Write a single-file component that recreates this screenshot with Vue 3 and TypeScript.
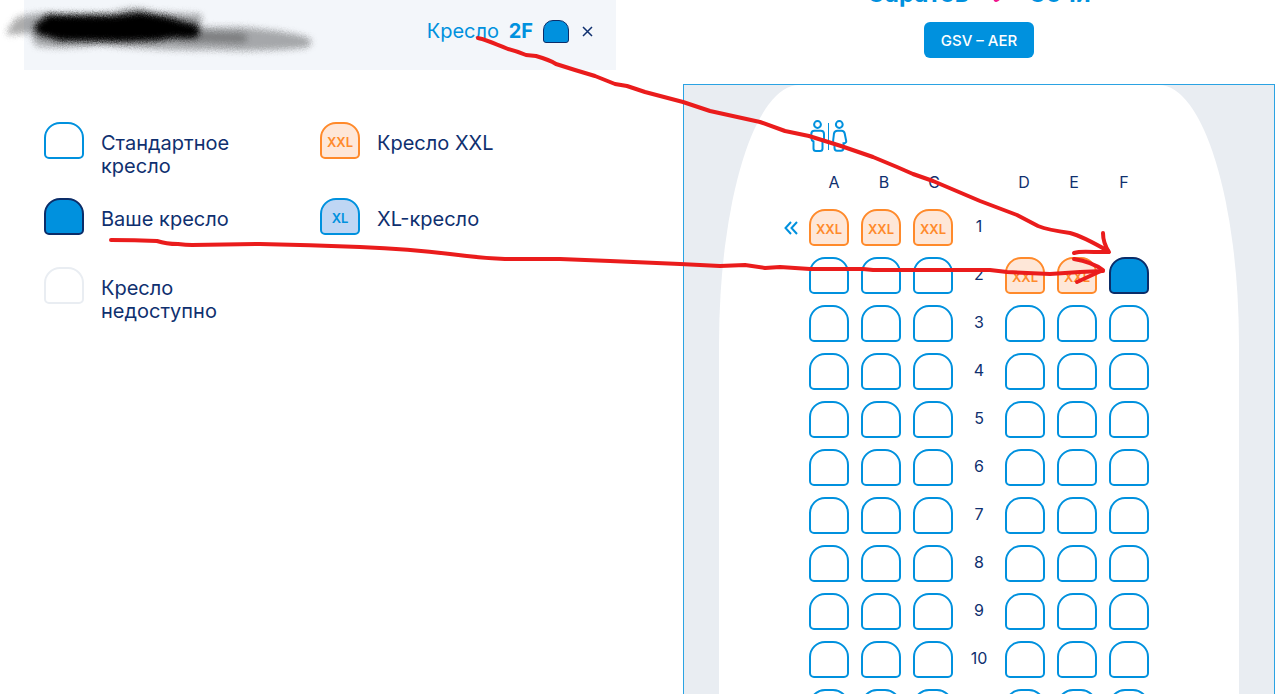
<script setup lang="ts">
type SeatKind = 'standard' | 'xxl' | 'xl' | 'selected' | 'unavailable'

interface LegendItem {
  kind: SeatKind
  label: string
}

interface SeatRow {
  number: number
  left: SeatKind[]
  right: SeatKind[]
  exit: boolean
}

const legend: LegendItem[] = [
  { kind: 'standard', label: 'Стандартное кресло' },
  { kind: 'xxl', label: 'Кресло XXL' },
  { kind: 'selected', label: 'Ваше кресло' },
  { kind: 'xl', label: 'XL-кресло' },
  { kind: 'unavailable', label: 'Кресло недоступно' },
]

const leftLetters = ['A', 'B', 'C']
const rightLetters = ['D', 'E', 'F']

const three = (kind: SeatKind): SeatKind[] => [kind, kind, kind]

const rows: SeatRow[] = [
  { number: 1, left: three('xxl'), right: [], exit: true },
  { number: 2, left: three('standard'), right: ['xxl', 'xxl', 'selected'], exit: false },
  ...Array.from({ length: 9 }, (_, i) => ({
    number: i + 3,
    left: three('standard'),
    right: three('standard'),
    exit: false,
  })),
]

const mark = (kind: SeatKind): string => (kind === 'xxl' ? 'XXL' : kind === 'xl' ? 'XL' : '')
</script>

<template>
  <main class="page">
    <section class="side">
      <header class="passenger">
        <span class="passenger-seat">Кресло <b>2F</b></span>
        <span class="seat selected small"></span>
        <button class="close" type="button" aria-label="Убрать кресло">
          <svg width="11" height="11" viewBox="0 0 11 11"><path d="M1 1l9 9M10 1l-9 9" /></svg>
        </button>
      </header>
      <ul class="legend">
        <li v-for="item in legend" :key="item.kind">
          <span class="seat" :class="item.kind">{{ mark(item.kind) }}</span>
          <span class="legend-label">{{ item.label }}</span>
        </li>
      </ul>
    </section>

    <section class="map">
      <h1 class="route">
        <span>Саратов</span>
        <svg class="plane" width="28" height="28" viewBox="0 0 28 28">
          <path d="M2 13l21-11-6 12q-2 6-6 7-3-1 0-4l6-5" />
        </svg>
        <span>Сочи</span>
      </h1>
      <button class="segment" type="button">GSV – AER</button>

      <div class="cabin">
        <div class="fuselage">
          <div class="service">
            <svg width="38" height="32" viewBox="0 0 38 32" aria-label="Туалет">
              <circle cx="7.5" cy="4.5" r="3.4" />
              <path d="M4.5 10.7h6.200q3.300 0 3.300 3.300v4.500q0 2-1.500 2.500v7.500q0 2.500-2.500 2.500h-4q-2.500 0-2.500-2.500v-7q-2.200-1-2.200-3.500v-4q0-3.300 3.200-3.300z" />
              <path class="thin" d="M18.500 3v27" />
              <circle cx="29.300" cy="4.500" r="3.400" />
              <path d="M27.500 10.700h4q2.700 0 3.200 2.800l1.500 7.500q.3 1.600-1.700 2.300h-1v4.700q0 2.700-2.500 2.700h-4q-2.500 0-2.500-2.700v-4.700q-1.500-.3-1.400-2.300l.9-7.500q.5-2.800 3.500-2.800z" />
            </svg>
          </div>
          <div class="letters">
            <span v-for="l in leftLetters" :key="l">{{ l }}</span>
            <span class="gap"></span>
            <span v-for="l in rightLetters" :key="l">{{ l }}</span>
          </div>
          <div class="rows">
            <div v-for="row in rows" :key="row.number" class="row">
              <span class="exit">
                <svg v-if="row.exit" width="14" height="14" viewBox="0 0 14 14">
                  <path d="M7 1L1.500 7 7 13M13 1L7.500 7 13 13" />
                </svg>
              </span>
              <button
                v-for="(kind, i) in row.left"
                :key="leftLetters[i]"
                type="button"
                class="seat"
                :class="kind"
                :aria-label="`${row.number}${leftLetters[i]}`"
              >{{ mark(kind) }}</button>
              <span class="number">{{ row.number }}</span>
              <button
                v-for="(kind, i) in row.right"
                :key="rightLetters[i]"
                type="button"
                class="seat"
                :class="kind"
                :aria-label="`${row.number}${rightLetters[i]}`"
              >{{ mark(kind) }}</button>
            </div>
          </div>
        </div>
      </div>
    </section>

    <svg class="ink" width="1280" height="694" viewBox="0 0 1280 694" aria-hidden="true">
      <defs>
        <filter id="spray" x="-10%" y="-60%" width="120%" height="220%">
          <feGaussianBlur stdDeviation="3" result="soft" />
          <feTurbulence type="fractalNoise" baseFrequency="0.8" numOctaves="2" seed="4" />
          <feDisplacementMap in="soft" scale="4" xChannelSelector="R" yChannelSelector="G" />
        </filter>
      </defs>
      <g filter="url(#spray)">
        <path d="M7 31L16 18Q36 11 60 14L110 13Q135 4 155 12L200 14Q205 20 198 27L240 27Q290 31 309 38Q315 44 305 48Q260 52 215 50Q150 51 100 45Q60 50 36 46L30 33L8 35Z" fill="#000" opacity=".32" />
        <path d="M180 36L242 38" stroke="#000" stroke-width="10" stroke-linecap="round" opacity=".25" />
        <path d="M34 27L48 14Q80 15 115 15L140 12L165 16L198 25Q204 32 192 36L155 41L120 42L60 41L40 35Z" fill="#000" />
        <path d="M42 28L90 28L140 30L192 31" stroke="#000" stroke-width="15" stroke-linecap="round" fill="none" />
      </g>
      <g class="pen">
        <path d="M478 38Q484 39 508 49Q516 51 526 55L536 56Q550 60 556 64L575 70L595 76L615 84L627 86L645 92L683 102L710 111L760 122L785 131L809 136L841 146L873 157L897 167L913 174L933 181L980 201L1017 215L1038 226Q1048 230 1070 233Q1082 236 1108 251" />
        <path d="M1103 233Q1103 243 1109 252L1094 252Q1080 251 1074 253" />
        <path d="M111 240Q135 240 157 241Q166 244 178 244Q186 245 192 245L260 244Q310 245 360 247Q410 249 450 254Q480 258 505 259L560 259L610 261L680 264L720 266L745 265L765 268L780 267L810 269L863 269L873 270L990 270L1007 272L1050 274L1080 272L1103 271" />
        <path d="M1074 259Q1092 262 1103 270L1077 282" />
      </g>
    </svg>
  </main>
</template>

<style>
body {
  margin: 0;
  background: #fff;
  overflow: hidden;
}
</style>

<style scoped>
.page {
  position: relative;
  display: grid;
  grid-template-columns: 1fr 1fr;
  gap: 67px;
  height: 100vh;
  padding: 0 5px 0 24px;
  box-sizing: border-box;
  overflow: hidden;
  font-family: Inter, 'Open Sans', sans-serif;
  color: #0f306f;
}

.passenger {
  display: flex;
  align-items: center;
  justify-content: flex-end;
  gap: 10px;
  padding: 16px 20px 24px;
  background: #f3f6fa;
}

.passenger-seat {
  font-size: 20px;
  line-height: 30px;
  color: #0091de;
}

.passenger-seat b {
  margin-left: 4px;
}

.close {
  display: flex;
  margin: 0;
  padding: 3px;
  border: 0;
  background: none;
}

.close svg {
  fill: none;
  stroke: #0f306f;
  stroke-width: 1.5;
}

.seat {
  display: flex;
  flex: none;
  align-items: center;
  justify-content: center;
  box-sizing: border-box;
  width: 40px;
  height: 37px;
  margin: 0;
  padding: 3px 0 0;
  border: 2px solid #0091de;
  border-radius: 16px 16px 5px 5px;
  background: #fff;
  color: #0091de;
  font-family: inherit;
  font-size: 13px;
  font-weight: 600;
  line-height: 16px;
}

.seat.xxl {
  border-color: #ff8a2b;
  background: #fee7d8;
  color: #ff8a2b;
}

.seat.xl {
  background: #bfd6f4;
}

.seat.selected {
  border-color: #0b2d69;
  background: #0091de;
}

.seat.unavailable {
  border-color: #e9edf2;
}

.seat.small {
  width: 26px;
  height: 23px;
  border-width: 1px;
  border-radius: 10px 10px 3px 3px;
}

.legend {
  display: grid;
  grid-template-columns: 1fr 1fr;
  row-gap: 20px;
  margin: 0;
  padding: 52px 20px 0;
  list-style: none;
}

.legend li {
  display: flex;
  align-items: flex-start;
  gap: 17px;
  min-height: 49px;
}

.legend-label {
  max-width: 150px;
  padding-top: 10px;
  font-size: 20px;
  line-height: 23px;
}

.map {
  display: flex;
  flex-direction: column;
  align-items: center;
}

.route {
  display: flex;
  align-items: center;
  gap: 16px;
  margin: -22px 0 12px;
  font-size: 24px;
  line-height: 32px;
  color: #0091de;
}

.plane {
  fill: none;
  stroke: #f0148c;
  stroke-width: 2;
}

.segment {
  height: 36px;
  padding: 0 17px;
  border: 0;
  border-radius: 6px;
  background: #0091de;
  color: #fff;
  font-family: inherit;
  font-size: 15px;
  font-weight: 500;
}

.cabin {
  align-self: stretch;
  margin-top: 26px;
  padding: 0 35px;
  border: 1px solid #2ba3e3;
  background: #e9edf2;
}

.fuselage {
  display: flex;
  flex-direction: column;
  align-items: center;
  padding: 35px 0 48px;
  border-radius: 80px 80px 0 0 / 260px 260px 0 0;
  background: #fff;
}

.service {
  display: flex;
  width: 338px;
}

.service svg {
  fill: none;
  stroke: #0091de;
  stroke-width: 2;
}

.service .thin {
  stroke-width: 1;
}

.letters {
  display: flex;
  width: 340px;
  margin: 20px 0 17px;
  font-size: 16px;
  line-height: 20px;
  text-align: center;
}

.letters span {
  width: 50px;
}

.letters .gap {
  width: 40px;
}

.rows {
  display: grid;
  row-gap: 11px;
}

.row {
  display: grid;
  grid-template-columns: 13px repeat(3, 40px) 28px repeat(3, 40px) 13px;
  column-gap: 12px;
  align-items: center;
  min-height: 37px;
}

.exit {
  display: flex;
}

.exit svg {
  flex: none;
  fill: none;
  stroke: #0091de;
  stroke-width: 2;
}

.number {
  padding-bottom: 4px;
  font-size: 16px;
  line-height: 20px;
  text-align: center;
}

.ink {
  position: absolute;
  top: 0;
  left: 0;
  pointer-events: none;
}

.pen {
  fill: none;
  stroke: #ea1c1c;
  stroke-width: 4;
  stroke-linecap: round;
  stroke-linejoin: round;
}
</style>
